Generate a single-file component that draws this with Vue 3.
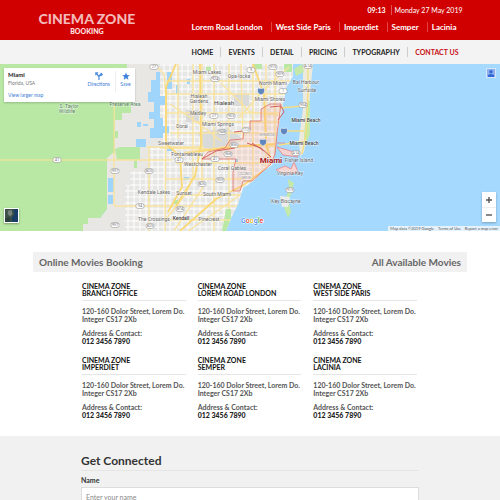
<script setup>
const theatres = ['Lorem Road London', 'West Side Paris', 'Imperdiet', 'Semper', 'Lacinia']
const menu = ['HOME', 'EVENTS', 'DETAIL', 'PRICING', 'TYPOGRAPHY', 'CONTACT US']
const offices = ['BRANCH OFFICE', 'LOREM ROAD LONDON', 'WEST SIDE PARIS', 'IMPERDIET', 'SEMPER', 'LACINIA']

const places = [
  { t: 'S. Taylor', x: 69, y: 44, c: 'park' },
  { t: 'Wildlife', x: 67, y: 49, c: 'park' },
  { t: 'Preserve Area', x: 125, y: 42, c: 'park' },
  { t: 'Miami Lakes', x: 207, y: 10 },
  { t: 'Opa-locka', x: 239, y: 14 },
  { t: 'North Miami', x: 273, y: 21 },
  { t: 'Hialeah', x: 199, y: 34 },
  { t: 'Gardens', x: 199, y: 39 },
  { t: 'Hialeah', x: 224, y: 41, c: 'town' },
  { t: 'Miami Shores', x: 270, y: 37 },
  { t: 'Medley', x: 198, y: 51 },
  { t: 'Doral', x: 182, y: 64 },
  { t: 'Miami Springs', x: 218, y: 62 },
  { t: 'Sweetwater', x: 171, y: 81 },
  { t: 'Fontainebleau', x: 187, y: 92 },
  { t: 'Westchester', x: 198, y: 102 },
  { t: 'Coral Gables', x: 232, y: 106 },
  { t: 'Kendale Lakes', x: 154, y: 130 },
  { t: 'Sunset', x: 184, y: 131 },
  { t: 'South Miami', x: 217, y: 132 },
  { t: 'The Crossings', x: 154, y: 157 },
  { t: 'Kendall', x: 181, y: 156, c: 'mid' },
  { t: 'Pinecrest', x: 209, y: 157 },
  { t: 'WYNWOOD', x: 267, y: 72, c: 'area' },
  { t: 'COCONUT', x: 245, y: 111, c: 'area' },
  { t: 'GROVE', x: 246, y: 115, c: 'area' },
  { t: 'Bal Harbour', x: 306, y: 20 },
  { t: 'Surfside', x: 307, y: 28 },
  { t: 'Miami Beach', x: 306, y: 58, c: 'mid' },
  { t: 'Miami Beach', x: 304, y: 81, c: 'mid' },
  { t: 'Fisher Island', x: 299, y: 98 },
  { t: 'Virginia Key', x: 290, y: 111 },
  { t: 'Key Biscayne', x: 286, y: 139 },
  { t: 'Miami', x: 271, y: 99, c: 'city' }
]
const shields = [
  ['27', 154, 3], ['41', 57, 96], ['997', 115, 107], ['825', 149, 107], ['94', 140, 142], ['997', 115, 161],
  ['825', 150, 162], ['924', 215, 15], ['9', 251, 6], ['27', 214, 52], ['953', 231, 52], ['948', 222, 68],
  ['112', 246, 66], ['836', 234, 81], ['968', 228, 90], ['41', 179, 96], ['41', 215, 95], ['826', 202, 120],
  ['959', 220, 116], ['874', 180, 145], ['915', 273, 3], ['909', 280, 10], ['1', 283, 27], ['934', 303, 41],
  ['A1A', 308, 2], ['A1A', 296, 89], ['913', 290, 126]
]
</script>

<template>
  <div class="page">
    <header class="top">
      <div class="wrap top-grid">
        <a class="logo" href="#"><span class="logo-name">CINEMA ZONE</span><span class="logo-sub">BOOKING</span></a>
        <div class="top-right">
          <p class="clock"><b>09:13</b><span>Monday 27 May 2019</span></p>
          <nav class="theatres" aria-label="Theatres">
            <a v-for="t in theatres" :key="t" href="#">{{ t }}</a>
          </nav>
        </div>
      </div>
    </header>

    <div class="menu-bar">
      <div class="wrap top-grid">
        <nav class="menu" aria-label="Main">
          <a v-for="m in menu" :key="m" href="#" :class="{ active: m === 'CONTACT US' }">{{ m }}</a>
        </nav>
      </div>
    </div>

    <section class="map">
      <svg class="map-art" viewBox="0 0 500 167" preserveAspectRatio="xMidYMid slice" aria-label="Map of Miami">
        <defs>
          <pattern id="streets" width="6" height="6" patternUnits="userSpaceOnUse">
            <path d="M0 1H6M2 0V6" stroke="#fff" stroke-width="1" />
          </pattern>
          <clipPath id="landclip"><path d="M107 0H293L293 12 286 24 283 40 280 55 277 70 275 88 272 101 262 108 252 118 243 124 238 140 232 152 226 167H83V160H88V154H100L107 145Z" /></clipPath>
        </defs>
        <rect width="500" height="167" fill="#a5d9fe" />
        <g clip-path="url(#landclip)">
          <rect width="310" height="167" fill="#e9e7e3" />
          <path d="M158 0H310V167H150V140H123V121H128V107H148V70H160Z" fill="#e6e6e5" />
          <path d="M160 0H310V167H160ZM148 84H160V167H125V121H130V107H148Z" fill="url(#streets)" />
          <path d="M198 68 228 64 242 74 226 83 204 87ZM234 30H249V42H234ZM186 46H199V58H186Z" fill="#d9dada" />
          <path d="M115 38H131V49H122V56H115ZM115 85 120 83H140V96H137V104H134V96H117ZM115 67H118V74H115ZM226 145H231V167H222ZM206 3H211V7H206ZM253 0H262V5H253ZM174 136H178V140H174ZM284 0H292V8H284Z" fill="#b9e8a5" />
          <path d="M151 16H156V8H160V32H165V41H160V54H163V74H150V64H154V55H149V48H154V38H148V28H151ZM136 75H146V83H136ZM137 58H141V63H137ZM143 60H148V62H143ZM108 114H114V128H108ZM108 131H113V140H108ZM167 8H172V25H167ZM162 62H169V69H162ZM176 21H179V30H176ZM167 83H173V87H167ZM187 15H190V20H187ZM235 95H238V98H235ZM184 113H189V116H184Z" fill="#9fd4fb" />
          <g fill="none" stroke="#f8e3a0" stroke-width="1.4">
            <path d="M114 38V141Q116 143 126 142H248M107 96H172M149 82V167M147 83H204M155 0 164 10 166 32 165 167M166 17H300M178 0V74M167 49H280M193 0V113L186 130 166 155M202 0V125L174 167M214 0V167M229 0V145M241 0 243 75M253 0V113M266 0V105M275 0V92M166 30H292M195 58H282M170 69H281M160 84 213 85 228 82 278 82M176 99H272M166 115H245M178 131H240L210 152 188 167M166 156H230M170 40 201 61 221 77M239 54 261 29 289 3M221 19 250 48 278 51" />
          </g>
          <g fill="none" stroke="#fad875" stroke-width="1.8">
            <path d="M176 0 166 23V80L180 92 182 123 168 148M200 0 201 80 195 112 176 142M184 89 243 82 275 80M253 0 264 31 266 78 270 94M266 105 242 122 216 135 180 167" />
          </g>
        </g>
        <path d="M0 0H127V38H114V88L107 94V145L100 154H88V160H83V167H0Z" fill="#b8e8a4" />
        <path d="M0 96H108M114 38V90" fill="none" stroke="#e7e396" stroke-width="1.3" />
        <path d="M303 0H313L310 30 309 60 304 88 300 93 299 75 303 45Z" fill="#eceadd" />
        <path d="M294 5 302 0 304 8 296 12ZM307 37H310V70L305 83 304 72ZM288 115 294 119 291 130 288 137 286 134 289 124ZM284 143 289 139 291 148 288 154 286 149Z" fill="#c4e9a8" />
        <path d="M280 132 290 133 288 143 282 143Z" fill="#ececea" />
        <path d="M308 0V30L306 70 302 90M279 44 303 42M280 67H304M279 81 306 77" fill="none" stroke="#f4dd83" stroke-width="1.4" />
        <path d="M202 95 208 88 225 84 230 76 243 75 244 66H250V57H261V45L270 40H281L279 55 277 70 275 90 271 100 262 108 252 117H243L240 127H233V108L236 95Z" fill="#ff967d" fill-opacity=".17" stroke="#e2716a" stroke-width=".8" />
        <path d="M247 79 261 84 271 93M202 95 216 87 235 84M252 79 264 87M234 68 243 67M270 43 281 42 284 48 278 56" fill="none" stroke="#d2605b" stroke-width="1" />
        <path d="M277 83 294 88 298 93 283 91ZM276 106 285 102 291 105 294 98 298 108 287 111ZM277 79H285" fill="#f5d3d0" stroke="#e98388" stroke-width=".8" />
        <g v-for="(s, i) in shields" :key="i">
          <rect :x="s[1] - 4" :y="s[2] - 2.5" width="8" height="5" rx="2" fill="#fff" stroke="#999" stroke-width=".6" />
          <text :x="s[1]" :y="s[2] + 1.4" class="shield">{{ s[0] }}</text>
        </g>
        <path v-for="(p, i) in [[261, 27], [263, 78], [284, 67]]" :key="'i' + i" :transform="`translate(${p[0]} ${p[1]})`" d="M-3-3Q0-2 3-3Q5 2 0 4Q-5 2-3-3Z" fill="#5f86bd" stroke="#fff" stroke-width=".5" />
        <text v-for="(p, i) in places" :key="'p' + i" :x="p.x" :y="p.y" class="place" :class="p.c">{{ p.t }}</text>
        <text x="241" y="159" class="google"><tspan fill="#4285f4">G</tspan><tspan fill="#ea4335">o</tspan><tspan fill="#eab308">o</tspan><tspan fill="#4285f4">g</tspan><tspan fill="#34a853">l</tspan><tspan fill="#ea4335">e</tspan></text>
      </svg>

      <div class="card">
        <div class="card-text">
          <strong>Miami</strong>
          <span>Florida, USA</span>
          <a href="#">View larger map</a>
        </div>
        <a class="action" href="#">
          <svg viewBox="0 0 10 10" width="8" height="8"><path d="M5 10V6L2 2M5 6Q5 3 9 3M7 1 9 3 7 5M1 4V1H4" fill="none" stroke="#4a8be0" stroke-width="1.5" /></svg>
          Directions
        </a>
        <a class="action save" href="#">
          <svg viewBox="0 0 10 10" width="8" height="8"><path d="M5 .5 6.3 3.8 9.8 4 7.1 6.2 8 9.6 5 7.7 2 9.6 2.9 6.2.2 4 3.7 3.8Z" fill="#3f84dc" /></svg>
          Save
        </a>
      </div>
      <button class="satellite" aria-label="Show satellite imagery">
        <svg viewBox="0 0 14 14"><rect width="14" height="14" fill="#3d5148" /><path d="M9 0H14V14H8L7 10 10 6Z" fill="#173d68" /><path d="M3 2 7 1 8 5 6 8 3 6Z" fill="#75817a" /><path d="M0 10 5 9 6 14H0Z" fill="#2c403c" /></svg>
      </button>
      <button class="user" aria-label="Sign in">
        <svg viewBox="0 0 8 8"><rect width="8" height="8" fill="#8fb0ee" /><circle cx="4" cy="2.7" r="1.7" fill="#3367d6" /><path d="M1 8V6.5Q1 5 4 5T7 6.5V8Z" fill="#3367d6" /></svg>
      </button>
      <div class="zoom">
        <button aria-label="Zoom in"><svg viewBox="0 0 8 8"><path d="M4 1V7M1 4H7" stroke="#555" stroke-width="1.4" /></svg></button>
        <button aria-label="Zoom out"><svg viewBox="0 0 8 8"><path d="M1 4H7" stroke="#555" stroke-width="1.4" /></svg></button>
      </div>
      <div class="credits"><span>Map data ©2019 Google</span><a href="#">Terms of Use</a><a href="#">Report a map error</a></div>
    </section>

    <main class="main">
      <div class="title-bar"><h2>Online Movies Booking</h2><h2>All Available Movies</h2></div>
      <div class="offices">
        <article v-for="o in offices" :key="o">
          <h3>CINEMA ZONE<br />{{ o }}</h3>
          <p>120-160 Dolor Street, Lorem Do.<br />Integer CS17 2Xb</p>
          <p>Address &amp; Contact:<br /><b>012 3456 7890</b></p>
        </article>
      </div>
    </main>

    <section class="connect">
      <form class="form">
        <h2>Get Connected</h2>
        <label for="name">Name</label>
        <input id="name" type="text" placeholder="Enter your name" />
      </form>
    </section>
  </div>
</template>

<style>
body {
  background: #fff;
}
</style>

<style scoped>
.page {
  height: 100vh;
  overflow: hidden;
  font-family: Lato, "Liberation Sans", sans-serif;
  font-size: 7px;
  color: #444;
}
a {
  color: inherit;
  text-decoration: none;
}
h2, h3, p {
  margin: 0;
}
button {
  padding: 0;
  border: 0;
}
button svg {
  display: block;
}
.wrap {
  width: 85%;
  margin: 0 auto;
}
.top-grid {
  display: grid;
  grid-template-columns: 9fr 16fr;
}
.top {
  background: #d00000;
  color: #fff;
}
.top .wrap {
  height: 40px;
}
.logo {
  justify-self: start;
  display: flex;
  flex-direction: column;
  align-items: center;
  padding: 10px 0 0 1px;
  font-weight: 900;
}
.logo-name {
  font-size: 14px;
  line-height: 17px;
  color: #f3b9b9;
}
.logo-sub {
  font-size: 7px;
  line-height: 9px;
  color: #ffe3e3;
}
.clock {
  display: flex;
  justify-content: flex-end;
  padding-top: 5px;
  line-height: 10px;
}
.clock b {
  padding-right: 5px;
  margin-right: 3px;
  border-right: 1px solid #e25555;
}
.theatres, .menu {
  display: flex;
  justify-content: space-between;
  font-weight: 700;
  white-space: nowrap;
}
.theatres {
  padding: 7px 6px 0 1px;
  font-size: 8px;
  line-height: 10px;
}
.theatres a + a {
  padding-left: 4px;
  border-left: 1px solid #e04444;
}
.menu-bar {
  background: #f3f3f3;
}
.menu {
  grid-column: 2;
  padding: 7px 4px 7px 1px;
  font-size: 7px;
  line-height: 10px;
  color: #222;
}
.menu a + a {
  padding-left: 7px;
  border-left: 1px solid #ccc;
}
.menu .active {
  color: #c80f14;
}
.map {
  position: relative;
  font-family: Roboto, sans-serif;
}
.map-art {
  display: block;
  width: 100%;
  height: 167px;
}
.place {
  font-size: 5px;
  text-anchor: middle;
  fill: #666;
  stroke: #fff;
  stroke-width: 1px;
  stroke-opacity: .6;
  paint-order: stroke;
}
.park {
  fill: #4f7d55;
}
.mid {
  font-weight: 500;
  fill: #444;
}
.town {
  font-size: 6px;
  fill: #444;
}
.area {
  font-size: 3px;
  fill: #888;
}
.city {
  font-size: 8px;
  font-weight: 700;
  fill: #a3201d;
}
.shield {
  font-size: 4px;
  text-anchor: middle;
  fill: #777;
}
.google {
  font-size: 7px;
  font-weight: 500;
  stroke: #fff;
  stroke-width: 1px;
  paint-order: stroke;
}
.card {
  position: absolute;
  top: 4px;
  left: 4px;
  display: flex;
  box-sizing: border-box;
  width: 131px;
  height: 34px;
  padding: 3px 0 0 4px;
  background: #fff;
  box-shadow: 0 1px 2px #0003;
  font-family: Lato, sans-serif;
  font-size: 5px;
  color: #777;
}
.card-text {
  display: flex;
  flex: 1;
  flex-direction: column;
  line-height: 8px;
}
.card strong {
  font-size: 6px;
  color: #222;
}
.card-text a {
  margin-top: 4px;
  color: #3a7bd5;
}
.action {
  display: flex;
  flex-direction: column;
  align-items: center;
  gap: 1px;
  height: 20px;
  padding: 1px 5px 0;
  line-height: 7px;
  color: #3a7bd5;
}
.save {
  width: 19px;
  padding: 1px 0 0;
  border-left: 1px solid #eee;
}
.satellite {
  position: absolute;
  left: 4px;
  bottom: 8px;
  width: 15px;
  height: 15px;
  border: 1px solid #fff;
  box-shadow: 0 1px 2px #0005;
}
.user {
  position: absolute;
  top: 4px;
  right: 4px;
  width: 10px;
  height: 10px;
  border: 1px solid #d5e5fa;
}
.zoom {
  position: absolute;
  right: 4px;
  bottom: 9px;
  display: grid;
  width: 14px;
  background: #fff;
  box-shadow: 0 1px 2px #0004;
}
.zoom button {
  height: 15px;
  padding: 3px;
  background: none;
}
.zoom button + button {
  border-top: 1px solid #eee;
}
.credits {
  position: absolute;
  right: 0;
  bottom: 0;
  display: flex;
  gap: 4px;
  padding: 0 2px;
  background: #e5f2fb;
  font-family: Lato, sans-serif;
  font-size: 4px;
  line-height: 5px;
  color: #555;
}
.main {
  width: 86.8%;
  margin: 0 auto;
  padding: 21px 0 17px;
}
.title-bar {
  display: flex;
  justify-content: space-between;
  padding: 0 6px;
  background: #f1f1f1;
}
.title-bar h2 {
  font-size: 10px;
  line-height: 20px;
  color: #666;
}
.offices {
  display: grid;
  grid-template-columns: repeat(3, minmax(0, 1fr));
  gap: 12px;
  padding: 11px 50px 0 49px;
}
.offices h3 {
  padding-bottom: 3px;
  margin-bottom: 6px;
  border-bottom: 1px solid #e6e6e6;
  font-size: 7px;
  line-height: 7px;
  color: #111;
  white-space: nowrap;
}
.offices p {
  line-height: 8px;
  font-weight: 700;
  color: #555;
  white-space: nowrap;
}
.offices p + p {
  margin-top: 6px;
}
.offices b {
  color: #222;
}
.connect {
  padding: 17px 16.2%;
  background: #f1f1f1;
}
.form {
  display: flex;
  flex-direction: column;
}
.form h2 {
  padding-bottom: 1px;
  margin-bottom: 5px;
  border-bottom: 1px solid #e5e5e5;
  font-size: 12px;
  line-height: 16px;
  color: #333;
}
.form label {
  margin-bottom: 3px;
  font-size: 7px;
  font-weight: 700;
  line-height: 8px;
  color: #333;
}
.form input {
  box-sizing: border-box;
  width: 100%;
  height: 20px;
  padding: 0 4px;
  border: 1px solid #ddd;
  background: #fff;
  font: inherit;
}
.form input::placeholder {
  color: #888;
}
</style>
